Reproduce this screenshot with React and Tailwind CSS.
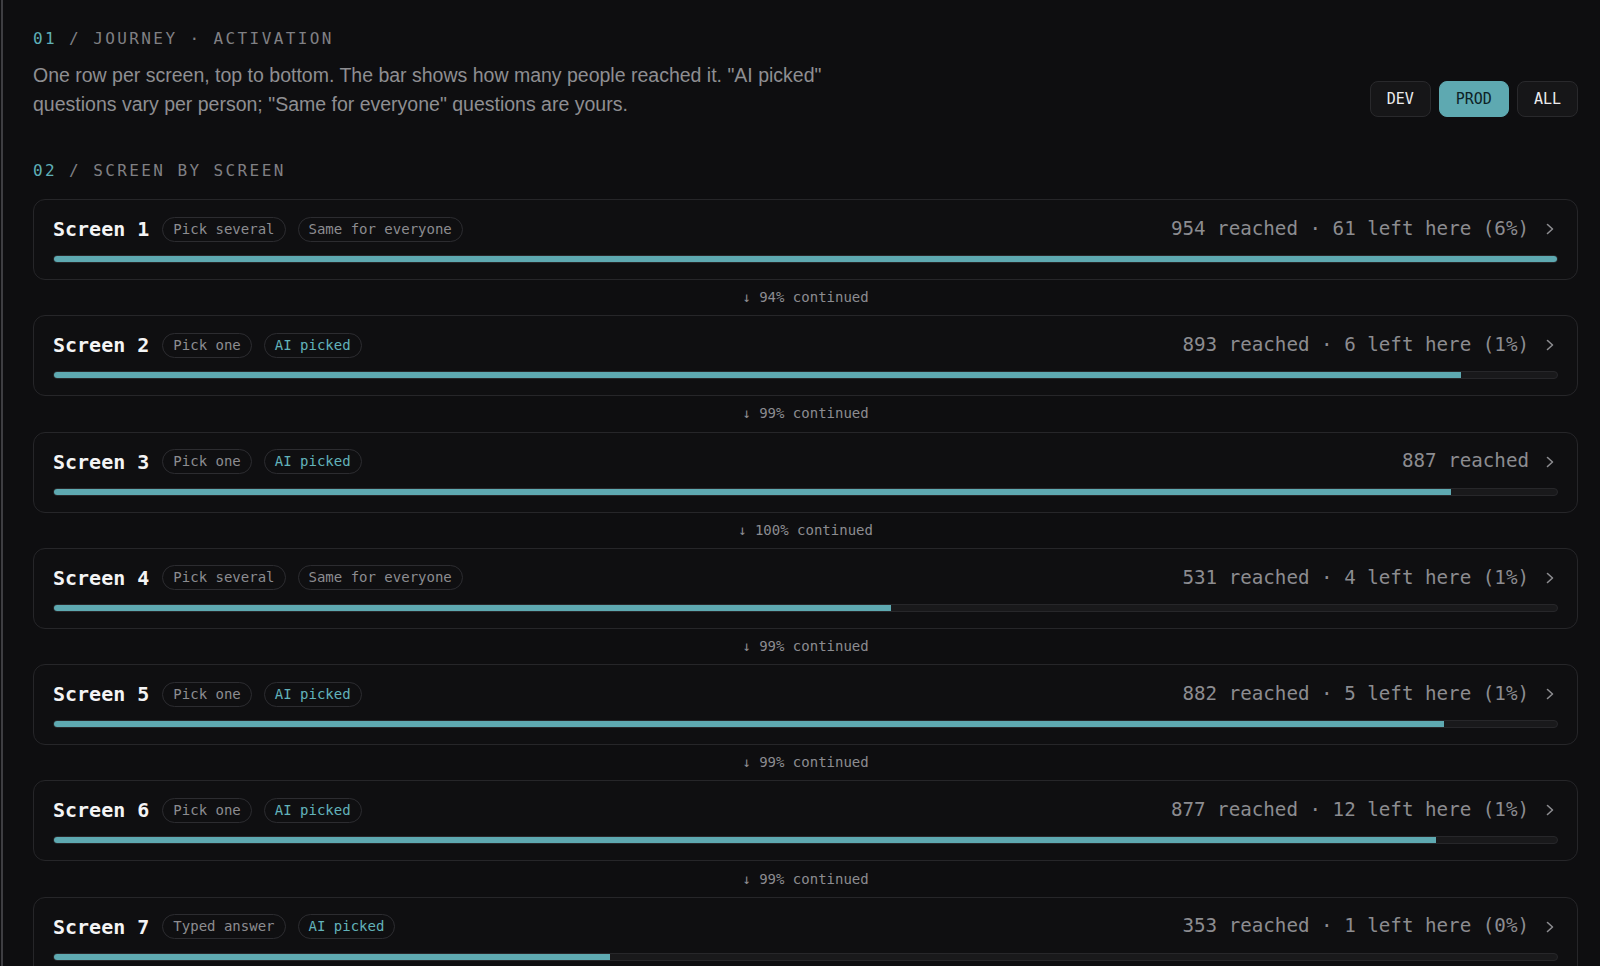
import { useState } from "react";

const MONO = "font-['DejaVu_Sans_Mono',monospace]";

const screens = [
  { id: 1, kind: "Pick several", source: "Same for everyone", reached: 954, left: 61, pct: 6, next: 94 },
  { id: 2, kind: "Pick one", source: "AI picked", reached: 893, left: 6, pct: 1, next: 99 },
  { id: 3, kind: "Pick one", source: "AI picked", reached: 887, left: 0, pct: 0, next: 100 },
  { id: 4, kind: "Pick several", source: "Same for everyone", reached: 531, left: 4, pct: 1, next: 99 },
  { id: 5, kind: "Pick one", source: "AI picked", reached: 882, left: 5, pct: 1, next: 99 },
  { id: 6, kind: "Pick one", source: "AI picked", reached: 877, left: 12, pct: 1, next: 99 },
  { id: 7, kind: "Typed answer", source: "AI picked", reached: 353, left: 1, pct: 0, next: null },
];

const maxReached = 954;

function SectionLabel({ num, children }) {
  return (
    <p className={`${MONO} text-[16px] leading-6 tracking-[0.15em] text-[#808084]`}>
      <span className="text-[#5fb0b8]">{num}</span> / {children}
    </p>
  );
}

function Tag({ children, accent }) {
  return (
    <span
      className={`inline-flex h-[25px] items-center rounded-full border border-[#2c2c30] px-[10px] text-[14px] ${
        accent ? "text-[#62b2ba]" : "text-[#8c8c90]"
      }`}
    >
      {children}
    </span>
  );
}

function Chevron() {
  return (
    <svg width="8" height="12" viewBox="0 0 8 12" fill="none" className="mr-[4px]">
      <path d="M1.5 1.5 L6.5 6 L1.5 10.5" stroke="#8c8c90" strokeWidth="1.6" strokeLinecap="round" strokeLinejoin="round" />
    </svg>
  );
}

function ScreenRow({ screen }) {
  const width = (screen.reached / maxReached) * 100;

  return (
    <div className="rounded-xl border border-[#262629] bg-[#0f0f11] px-[19px] pt-[15px] pb-4">
      <div className="flex h-7 items-center justify-between">
        <div className="flex items-center gap-3">
          <span className="mr-px text-[20px] font-bold text-[#f4f4f5]">Screen {screen.id}</span>
          <Tag>{screen.kind}</Tag>
          <Tag accent={screen.source === "AI picked"}>{screen.source}</Tag>
        </div>
        <div className="flex items-center gap-[17px]">
          <span className="text-[19.2px] text-[#8c8c90]">
            {screen.reached} reached
            {screen.left > 0 ? ` · ${screen.left} left here (${screen.pct}%)` : ""}
          </span>
          <Chevron />
        </div>
      </div>
      <div className="mt-3 h-2 overflow-hidden rounded-full border border-[#27272a] bg-[#19191b]">
        <div className="h-full bg-[#5ea9b1]" style={{ width: `${width}%` }} />
      </div>
    </div>
  );
}

export default function App() {
  const [env, setEnv] = useState("PROD");

  return (
    <div className="min-h-screen bg-[#0e0e10] pl-px">
      <div className={`min-h-screen border-l-2 border-[#3e3e42] pt-[27px] pr-[22px] pl-[30px] ${MONO}`}>
        <SectionLabel num="01">JOURNEY · ACTIVATION</SectionLabel>

        <div className="mt-[10px] flex items-end justify-between">
          <p className="max-w-[830px] font-['Liberation_Sans',Arial,sans-serif] text-[19.5px] leading-[29px] text-[#8e8e92]">
            One row per screen, top to bottom. The bar shows how many people reached it. "AI picked"
            questions vary per person; "Same for everyone" questions are yours.
          </p>
          <div className="mb-[2px] flex gap-2">
            {["DEV", "PROD", "ALL"].map((item) => (
              <button
                key={item}
                onClick={() => setEnv(item)}
                className={`h-9 rounded-lg border px-4 text-[15px] font-normal ${
                  env === item
                    ? "border-[#5ea9b1] bg-[#5ea9b1] text-[#0d2226]"
                    : "border-[#29292c] bg-[#161618] text-[#ececee]"
                }`}
              >
                {item}
              </button>
            ))}
          </div>
        </div>

        <div className="mt-[40px]">
          <SectionLabel num="02">SCREEN BY SCREEN</SectionLabel>
        </div>

        <div className="mt-4">
          {screens.map((screen) => (
            <div key={screen.id}>
              <ScreenRow screen={screen} />
              {screen.next !== null ? (
                <div className="flex h-[35.3px] items-center justify-center text-[14px] text-[#8c8c90]">
                  ↓ {screen.next}% continued
                </div>
              ) : null}
            </div>
          ))}
        </div>
      </div>
    </div>
  );
}
